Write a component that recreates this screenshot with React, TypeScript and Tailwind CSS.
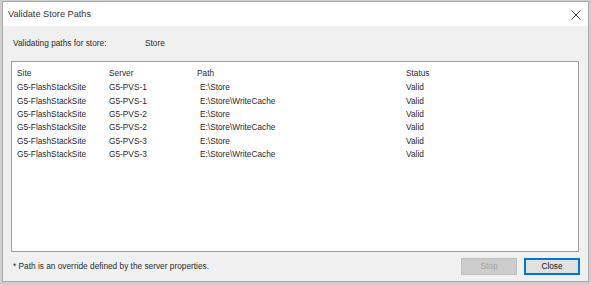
import React from 'react';

const rows = [
  { site: 'G5-FlashStackSite', server: 'G5-PVS-1', path: 'E:\\Store', status: 'Valid' },
  { site: 'G5-FlashStackSite', server: 'G5-PVS-1', path: 'E:\\Store\\WriteCache', status: 'Valid' },
  { site: 'G5-FlashStackSite', server: 'G5-PVS-2', path: 'E:\\Store', status: 'Valid' },
  { site: 'G5-FlashStackSite', server: 'G5-PVS-2', path: 'E:\\Store\\WriteCache', status: 'Valid' },
  { site: 'G5-FlashStackSite', server: 'G5-PVS-3', path: 'E:\\Store', status: 'Valid' },
  { site: 'G5-FlashStackSite', server: 'G5-PVS-3', path: 'E:\\Store\\WriteCache', status: 'Valid' },
];

const App: React.FC = () => {
  return (
    <div className="w-[591px] h-[285px] bg-[#cfcfcf] pt-[1px] overflow-hidden font-['Liberation_Sans',Arial,sans-serif] text-[8.3px] text-[#2a2a2a]">
      <div className="ml-[2px] w-[587px] h-[281px] border border-[#a8a8a8] bg-[#f0f0f0] flex flex-col">
        {/* Title bar */}
        <div className="h-[24px] bg-white flex items-center justify-between pl-[5px] pr-[7px] pt-[1px]">
          <span className="text-[9.2px] text-[#333]">Validate Store Paths</span>
          <svg width="10" height="10" viewBox="0 0 10 10" className="text-[#444]">
            <path d="M0.5 0.5 L9.5 9.5 M9.5 0.5 L0.5 9.5" stroke="currentColor" strokeWidth="1" fill="none" />
          </svg>
        </div>

        {/* Store label */}
        <div className="h-[35px] flex items-center pl-[10px] pb-[1px]">
          <span className="w-[132px]">Validating paths for store:</span>
          <span>Store</span>
        </div>

        {/* List */}
        <div className="ml-[8px] mr-[9px] h-[191px] bg-white border border-[#a0a0a0] pl-[5px] pt-[3px]">
          <div className="grid grid-cols-[92px_88px_209px_1fr] h-[16px] items-center">
            <span>Site</span>
            <span>Server</span>
            <span>Path</span>
            <span>Status</span>
          </div>
          {rows.map((r, i) => (
            <div key={i} className="grid grid-cols-[92px_88px_209px_1fr] h-[13.3px] items-center">
              <span>{r.site}</span>
              <span>{r.server}</span>
              <span className="pl-[3px]">{r.path}</span>
              <span>{r.status}</span>
            </div>
          ))}
        </div>

        {/* Footer */}
        <div className="flex items-center justify-between pl-[10px] pr-[8px] pt-[6px]">
          <span>* Path is an override defined by the server properties.</span>
          <div className="flex gap-[7px]">
            <button className="w-[56px] h-[17px] bg-[#cccccc] border border-[#bfbfbf] text-[#a3a3a3] text-[8.3px] leading-none">
              Stop
            </button>
            <button className="w-[56px] h-[17px] bg-[#e1e1e1] border-2 border-[#0078d7] text-[#111] text-[8.3px] leading-none">
              Close
            </button>
          </div>
        </div>
      </div>
    </div>
  );
};

export default App;
